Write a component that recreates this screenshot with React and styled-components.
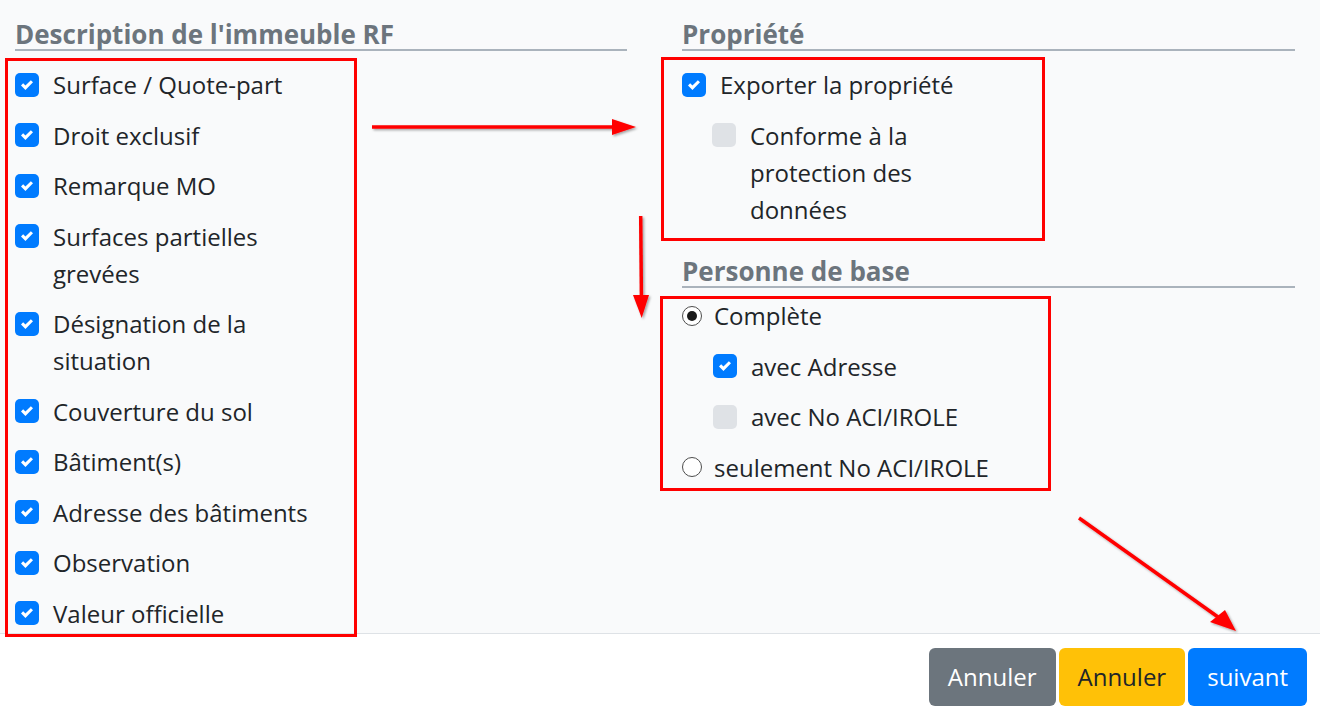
import React from 'react'
import styled, { createGlobalStyle } from 'styled-components'

const GlobalStyle = createGlobalStyle`
    html, body {
        margin: 0;
        padding: 0;
        background: #fff;
        font-family: "Open Sans", "Noto Sans", sans-serif;
        color: #212529;
    }
    * {
        box-sizing: border-box;
    }
`

const Page = styled.div`
    position: relative;
    display: flex;
    flex-direction: column;
    height: 100vh;
    overflow: hidden;
`

const Main = styled.main`
    flex: 1;
    background: #f9fafb;
    display: grid;
    grid-template-columns: 612px 613px;
    column-gap: 55px;
    align-content: start;
    padding: 20px 0 0 15px;
`

const Column = styled.section`
    display: flex;
    flex-direction: column;
`

const SectionTitle = styled.h5`
    margin: ${p => p.$top || 0}px 0 0;
    font-size: 26px;
    line-height: 29px;
    font-weight: 700;
    color: #6c757d;
    border-bottom: 2px solid #aab3bc;
`

const OptionList = styled.div`
    display: flex;
    flex-direction: column;
    gap: 13.5px;
    width: ${p => p.$width}px;
    margin-top: ${p => p.$top}px;
`

const Row = styled.label`
    display: flex;
    align-items: flex-start;
    padding-left: ${p => p.$indent || 0}px;
    font-size: 24px;
    line-height: 37px;
    color: #212529;
`

const Box = styled.span`
    flex-shrink: 0;
    width: 24px;
    height: 24px;
    margin: 6.5px 14px 0 0;
    border-radius: 5px;
    background: ${p => (p.$checked ? '#007bff' : '#dfe2e6')};
    display: flex;
    align-items: center;
    justify-content: center;
`

const Radio = styled.span`
    flex-shrink: 0;
    width: 20px;
    height: 20px;
    margin: 8.5px 12px 0 0;
    border-radius: 50%;
    border: 1.5px solid #4d4d4d;
    background: #fff;
    display: flex;
    align-items: center;
    justify-content: center;

    &::after {
        content: '';
        display: ${p => (p.$checked ? 'block' : 'none')};
        width: 10px;
        height: 10px;
        border-radius: 50%;
        background: #1a1a1a;
    }
`

const Footer = styled.footer`
    display: flex;
    justify-content: flex-end;
    gap: 3px;
    padding: 14px 13px 9px;
    border-top: 1px solid #dee2e6;
    background: #fff;
`

const buttonColors = {
    secondary: { bg: '#6c757d', fg: '#fff' },
    warning: { bg: '#ffc107', fg: '#212529' },
    primary: { bg: '#007bff', fg: '#fff' },
}

const Button = styled.button`
    font-family: "Open Sans", "Noto Sans", sans-serif;
    font-size: 24px;
    line-height: 36px;
    padding: 10px 18px;
    border: 1px solid transparent;
    border-radius: 6px;
    background: ${p => buttonColors[p.$variant].bg};
    color: ${p => buttonColors[p.$variant].fg};
    cursor: pointer;
`

/* red annotations drawn over the form */
const Overlay = styled.div`
    position: absolute;
    inset: 0;
    pointer-events: none;
`

const Frame = styled.div`
    position: absolute;
    left: ${p => p.$x}px;
    top: ${p => p.$y}px;
    width: ${p => p.$w}px;
    height: ${p => p.$h}px;
    border: 3px solid #ff0000;
`

const Arrows = styled.svg`
    position: absolute;
    inset: 0;
`

const Check = ({ checked = true, indent, children }) => (
    <Row $indent={indent}>
        <Box $checked={checked}>
            {checked && (
                <svg width="12" height="12" viewBox="0 0 8 8">
                    <path fill="#fff" d="M6.564.75l-3.59 3.612-1.538-1.55L0 4.26l2.974 2.99L8 2.193z" />
                </svg>
            )}
        </Box>
        <span>{children}</span>
    </Row>
)

const RadioOption = ({ checked, children }) => (
    <Row>
        <Radio $checked={checked} />
        <span>{children}</span>
    </Row>
)

const descriptionItems = [
    'Surface / Quote-part',
    'Droit exclusif',
    'Remarque MO',
    'Surfaces partielles grevées',
    'Désignation de la situation',
    'Couverture du sol',
    'Bâtiment(s)',
    'Adresse des bâtiments',
    'Observation',
    'Valeur officielle',
]

const App = () => {
    return (
        <>
            <GlobalStyle />
            <Page>
                <Main>
                    <Column>
                        <SectionTitle>Description de l'immeuble RF</SectionTitle>
                        <OptionList $width={308} $top={15}>
                            {descriptionItems.map(item => (
                                <Check key={item}>{item}</Check>
                            ))}
                        </OptionList>
                    </Column>
                    <Column>
                        <SectionTitle>Propriété</SectionTitle>
                        <OptionList $width={300} $top={15}>
                            <Check>Exporter la propriété</Check>
                            <Check checked={false} indent={30}>Conforme à la protection des données</Check>
                        </OptionList>
                        <SectionTitle $top={29}>Personne de base</SectionTitle>
                        <OptionList $width={340} $top={9.5}>
                            <RadioOption checked>Complète</RadioOption>
                            <Check indent={31}>avec Adresse</Check>
                            <Check checked={false} indent={31}>avec No ACI/IROLE</Check>
                            <RadioOption>seulement No ACI/IROLE</RadioOption>
                        </OptionList>
                    </Column>
                </Main>
                <Footer>
                    <Button $variant="secondary">Annuler</Button>
                    <Button $variant="warning">Annuler</Button>
                    <Button $variant="primary">suivant</Button>
                </Footer>
                <Overlay>
                    <Frame $x={5} $y={58} $w={352} $h={579} />
                    <Frame $x={661} $y={57} $w={384} $h={184} />
                    <Frame $x={660} $y={296} $w={391} $h={195} />
                    <Arrows width="1320" height="715" viewBox="0 0 1320 715">
                        <defs>
                            <filter id="shade" x="-20%" y="-20%" width="140%" height="140%">
                                <feDropShadow dx="1.5" dy="1.5" stdDeviation="1" floodColor="#000" floodOpacity="0.35" />
                            </filter>
                        </defs>
                        <g fill="#ff0000" stroke="#ff0000" filter="url(#shade)">
                            <line x1="372" y1="127" x2="614" y2="127" strokeWidth="3.5" />
                            <polygon points="612,119 636,127 612,135" stroke="none" />
                            <line x1="640.7" y1="216" x2="641.4" y2="297" strokeWidth="3.5" />
                            <polygon points="633,295 649,295 641.7,318" stroke="none" />
                            <line x1="1079" y1="518" x2="1218" y2="617" strokeWidth="3.5" />
                            <polygon points="1210,622 1225,610 1236,631" stroke="none" />
                        </g>
                    </Arrows>
                </Overlay>
            </Page>
        </>
    )
}

export default App
